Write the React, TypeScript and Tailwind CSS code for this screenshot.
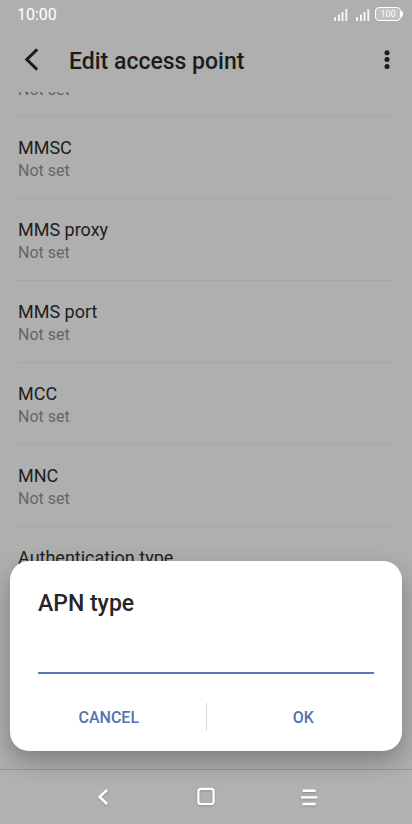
const settings = ["MMSC", "MMS proxy", "MMS port", "MCC", "MNC", "Authentication type"];

function Signal() {
  return (
    <svg width="14" height="12" viewBox="0 0 14 12" fill="#f4f4f4" aria-hidden="true">
      <rect x="0" y="8" width="2" height="4" rx="0.6" />
      <rect x="4" y="5.5" width="2" height="6.5" rx="0.6" />
      <rect x="7.5" y="3" width="2" height="9" rx="0.6" />
      <rect x="11.3" y="0" width="2" height="12" rx="0.6" />
    </svg>
  );
}

function StatusBar() {
  return (
    <div className="flex h-7 shrink-0 items-center justify-between pr-[9px] pl-[17px] text-white">
      <span className="pt-0.5 text-base leading-7">10:00</span>
      <div className="flex items-center gap-2">
        <div className="flex gap-2 pt-0.5">
          <Signal />
          <Signal />
        </div>
        <div className="-ml-[3px] flex items-center">
          <div className="flex h-[14px] w-[26px] items-center justify-center rounded-[4px] border border-white bg-[#c2c2c2] text-[9px] leading-3 text-white">
            100
          </div>
          <div className="h-1.5 w-0.5 rounded-r-sm bg-white" />
        </div>
      </div>
    </div>
  );
}

function Header() {
  return (
    <header className="flex h-16 shrink-0 items-center pr-[13px] pl-4">
      <button type="button" aria-label="Back" className="flex size-8 items-center justify-center">
        <svg width="32" height="32" viewBox="0 0 32 32" fill="none" stroke="#1c1c1c" strokeWidth="3">
          <path d="M21.2 5.4 10.8 15.5l10.4 10.1" />
        </svg>
      </button>
      <h1 className="ml-[21px] flex-1 pt-[3px] text-[23px] leading-8 font-medium text-[#1c1c1c]">Edit access point</h1>
      <button type="button" aria-label="More options" className="flex h-8 w-6 items-center justify-center">
        <svg width="6" height="20" viewBox="0 0 6 20" fill="#1c1c1c">
          <circle cx="3" cy="2.8" r="2.5" />
          <circle cx="3" cy="9.6" r="2.5" />
          <circle cx="3" cy="16.4" r="2.5" />
        </svg>
      </button>
    </header>
  );
}

function SettingsList() {
  return (
    <main className="min-h-0 flex-1 overflow-hidden">
      <ul className="px-[18px]">
        <li className="flex h-[25px] items-end border-b border-[#a5a5a5] pb-[14px]">
          <p className="text-base leading-6 text-[#656565]">Not set</p>
        </li>
        {settings.map((name) => (
          <li key={name} className="h-[82px] border-b border-[#a5a5a5] pt-[19px]">
            <p className="text-lg leading-[23px] text-[#202020]">{name}</p>
            <p className="text-base leading-6 text-[#656565]">Not set</p>
          </li>
        ))}
      </ul>
    </main>
  );
}

function NavBar() {
  const button = "flex size-8 items-center justify-center drop-shadow-[0_1px_1px_rgba(0,0,0,0.2)]";
  return (
    <nav className="flex h-[55px] shrink-0 items-center justify-center gap-[71px] border-t border-[#969696] bg-[#b1b1b1]">
      <button type="button" aria-label="Back" className={button}>
        <svg width="32" height="32" viewBox="0 0 32 32" fill="none" stroke="#fff" strokeWidth="2.5">
          <path d="M20 9 12.6 16l7.4 7" />
        </svg>
      </button>
      <button type="button" aria-label="Home" className={button}>
        <svg width="32" height="32" viewBox="0 0 32 32" fill="none" stroke="#fff" strokeWidth="2.2">
          <rect x="8.4" y="7.8" width="15.2" height="15.2" rx="2.6" />
        </svg>
      </button>
      <button type="button" aria-label="Recent apps" className={button}>
        <svg width="32" height="32" viewBox="0 0 32 32" fill="none" stroke="#fff" strokeWidth="2.4">
          <path d="M9.5 9.8h13.2M8 16.4h16.2M9.5 23h13.2" />
        </svg>
      </button>
    </nav>
  );
}

function ApnDialog() {
  return (
    <div className="absolute inset-0 flex items-end px-[10px] pb-[73px]">
      <form
        role="dialog"
        aria-labelledby="apn-title"
        className="w-full rounded-[19px] bg-white px-7 pt-[29px] pb-4 shadow-[0_10px_24px_rgba(0,0,0,0.28)]"
      >
        <label id="apn-title" htmlFor="apn-type" className="block text-[23px] leading-7 font-medium text-[#262626]">
          APN type
        </label>
        <input
          id="apn-type"
          type="text"
          className="mt-4 block h-10 w-full border-b-2 border-[#5777b3] bg-transparent text-lg outline-none"
        />
        <div className="mt-[25px] flex items-center text-base leading-6 font-medium text-[#5373b3]">
          <button type="button" className="h-9 flex-1 pt-0.5 pr-[26px]">CANCEL</button>
          <span className="h-7 w-px bg-[#d8d8d8]" />
          <button type="submit" className="h-9 flex-1 pt-0.5 pl-[26px]">OK</button>
        </div>
      </form>
    </div>
  );
}

export default function App() {
  return (
    <div className="relative flex h-screen flex-col overflow-hidden bg-[#afafaf] font-[Roboto,sans-serif]">
      <StatusBar />
      <Header />
      <SettingsList />
      <NavBar />
      <ApnDialog />
    </div>
  );
}
